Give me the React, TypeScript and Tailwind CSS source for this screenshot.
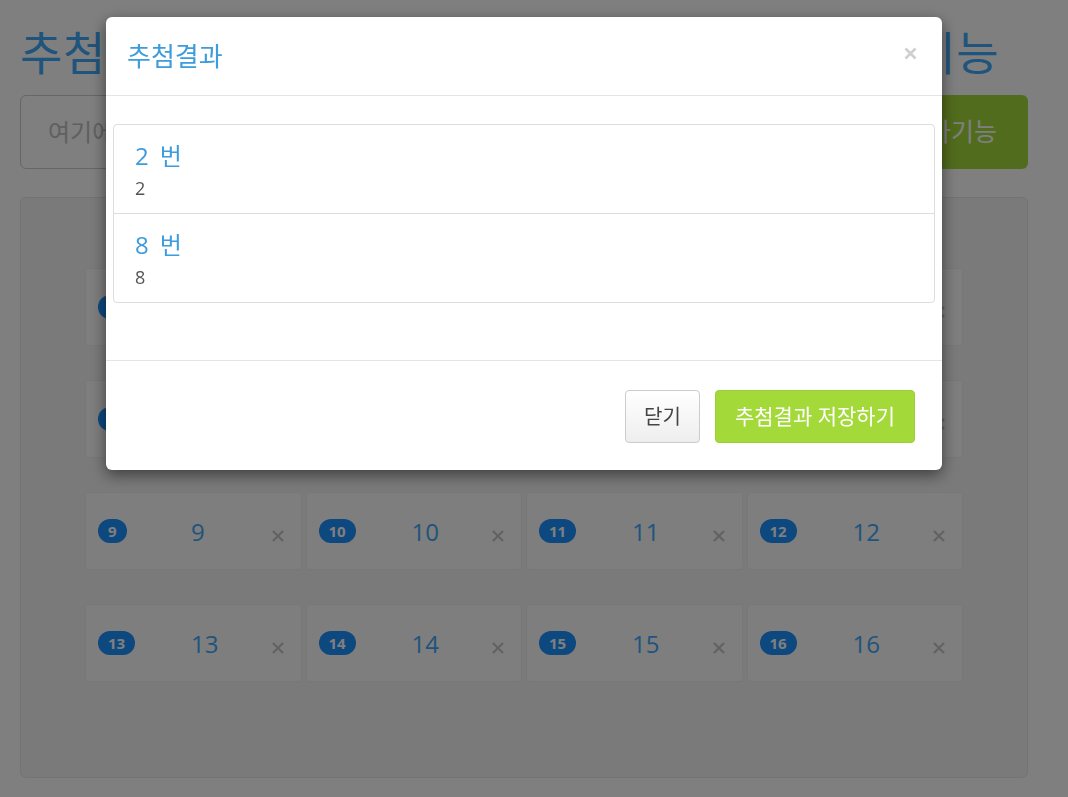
import React from "react";

const font = "font-['Open_Sans','Noto_Sans_CJK_KR',sans-serif]";

const numbers = Array.from({ length: 16 }, (_, i) => i + 1);

const winners = [2, 8];

function Card({ n }: { n: number }) {
  return (
    <div className="grid h-[78px] grid-cols-[93px_1fr_auto] items-center rounded-[3px] border border-[#efefef] bg-[#fcfcfc] pl-3 pr-4">
      <div>
        <span className="inline-flex h-[24px] items-center rounded-full bg-[#1a90ff] px-[10px] text-[15px] font-bold leading-none text-white">
          {n}
        </span>
      </div>
      <div className="pt-[1px] text-[24px] leading-none text-[#3fa8f8]">{n}</div>
      <svg width="14" height="14" viewBox="0 0 14 14" className="mt-[10px]">
        <path d="M2 2L12 12M12 2L2 12" stroke="#c4c4c4" strokeWidth="2.2" />
      </svg>
    </div>
  );
}

function App() {
  return (
    <div className={`relative min-h-screen bg-white pl-5 pr-10 ${font}`}>
      <h1 className="pt-[22px] text-[46px] leading-[60px] tracking-[0.7px] text-[#3fa8f8]">
        추첨 번호를 입력하고 추첨하기 버튼을 누르는 기능
      </h1>
      <div className="mt-[13px] flex h-[74px]">
        <input
          className="flex-1 rounded-l-md border border-[#cccccc] px-[27px] text-[24px] text-[#555] outline-none placeholder:text-[#c0c0c0]"
          placeholder="여기에 번호를 입력하세요"
        />
        <button className="flex w-[200px] items-center justify-end rounded-r-md bg-[#a4d93a] pr-[31px] text-[25px] text-white">
          추가기능
        </button>
      </div>
      <div className="mt-[28px] rounded-md border border-[#e6e6e6] bg-[#f5f5f5] px-[64px] pt-[70px] pb-[95px]">
        <div className="grid grid-cols-4 gap-x-[4px] gap-y-[34px]">
          {numbers.map((n) => (
            <Card key={n} n={n} />
          ))}
        </div>
      </div>

      {/* modal */}
      <div className="fixed inset-0 bg-black/50">
        <div className="absolute left-[106px] top-[17px] w-[836px] rounded-md bg-white shadow-[0_5px_15px_rgba(0,0,0,0.5)]">
          <div className="flex h-[79px] items-center justify-between border-b border-[#e5e5e5] pl-[21px] pr-[25px]">
            <h4 className="text-[26px] leading-none text-[#3c9cdc]">추첨결과</h4>
            <svg width="13" height="13" viewBox="0 0 13 13" className="-mt-[5px]">
              <path d="M1.5 1.5L11.5 11.5M11.5 1.5L1.5 11.5" stroke="#cfcfcf" strokeWidth="2.6" />
            </svg>
          </div>
          <div className="px-[7px] pt-[28px] pb-[57px]">
            <div className="divide-y divide-[#dddddd] rounded-[4px] border border-[#dddddd]">
              {winners.map((w) => (
                <div key={w} className="px-[21px] pt-[16px] pb-[13px]">
                  <div className="text-[24px] leading-[30px] text-[#3c9cdc]">
                    <span>{w}</span>
                    <span className="ml-[11px]">번</span>
                  </div>
                  <div className="mt-[5px] text-[18px] leading-[24px] text-[#555]">{w}</div>
                </div>
              ))}
            </div>
          </div>
          <div className="flex justify-end gap-[15px] border-t border-[#e5e5e5] px-[27px] pt-[29px] pb-[27px]">
            <button className="h-[53px] w-[75px] rounded-[4px] border border-[#cccccc] bg-gradient-to-b from-white to-[#eeeeee] text-[20px] text-[#444]">
              닫기
            </button>
            <button className="h-[53px] w-[200px] rounded-[4px] border border-[#9bcf33] bg-[#a4d93a] text-[21px] text-white">
              추첨결과 저장하기
            </button>
          </div>
        </div>
      </div>
    </div>
  );
}

export default App;
